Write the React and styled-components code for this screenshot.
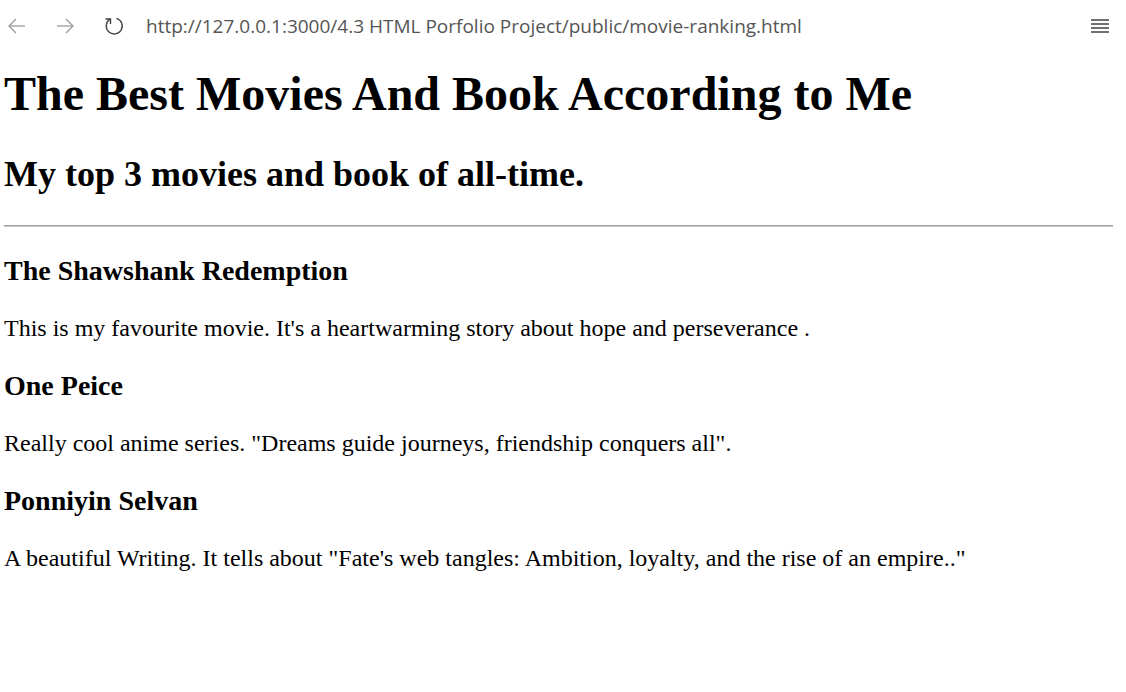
import React from "react";
import styled, { createGlobalStyle } from "styled-components";

const GlobalStyle = createGlobalStyle`
  html, body { margin: 0; padding: 0; background: #ffffff; }
`;

const Toolbar = styled.div`
  height: 52px;
  display: flex;
  align-items: center;
  gap: 28px;
  padding: 0 16px 0 7px;
  font-family: "Open Sans", "Noto Sans", sans-serif;
  color: #5f5f5f;
`;

const NavButton = styled.span`
  display: flex;
  align-items: center;
  justify-content: center;
  color: ${(p) => (p.$dim ? "#9a9a9a" : "#444")};
`;

const Url = styled.div`
  flex: 1;
  margin-left: -7px;
  font-size: 19px;
  color: #555;
  white-space: nowrap;
`;

const Menu = styled.span`
  display: flex;
  color: #444;
`;

const Page = styled.main`
  padding: 0 13px 0 4px;
  font-family: "Liberation Serif", "Times New Roman", serif;
  color: #000;
  margin-top: -18px;
`;

const Title = styled.h1`
  font-size: 48px;
  margin: 32px 0;
`;

const Subtitle = styled.h2`
  font-size: 36px;
  margin: 30px 0;
`;

const Rule = styled.hr`
  margin: 12px 0;
  border: none;
  border-top: 1px solid #a0a0a0;
  border-bottom: 1px solid #c8c8c8;
`;

const ItemTitle = styled.h3`
  font-size: 28px;
  margin: 28px 0;
`;

const Text = styled.p`
  font-size: 24px;
  margin: 24px 0;
`;

const Arrow = ({ flip }) => (
  <svg width="20" height="20" viewBox="0 0 20 20" fill="none" stroke="currentColor" strokeWidth="1.3">
    {flip ? (
      <>
        <path d="M2 10h16" />
        <path d="M11 3l7 7-7 7" />
      </>
    ) : (
      <>
        <path d="M18 10H2" />
        <path d="M9 3L2 10l7 7" />
      </>
    )}
  </svg>
);

const Reload = () => (
  <svg width="22" height="22" viewBox="0 0 22 22" fill="none" stroke="currentColor" strokeWidth="1.4">
    <path d="M7 4.2A8 8 0 1 0 13.5 3.3" />
    <path d="M7.5 9V4H2.5" />
  </svg>
);

const Lines = () => (
  <svg width="20" height="18" viewBox="0 0 20 18" stroke="currentColor" strokeWidth="1.3">
    <path d="M1 3h18M1 7h18M1 11h18M1 15h18" />
  </svg>
);

const items = [
  {
    title: "The Shawshank Redemption",
    text: "This is my favourite movie. It's a heartwarming story about hope and perseverance .",
  },
  {
    title: "One Peice",
    text: 'Really cool anime series. "Dreams guide journeys, friendship conquers all".',
  },
  {
    title: "Ponniyin Selvan",
    text: 'A beautiful Writing. It tells about "Fate\'s web tangles: Ambition, loyalty, and the rise of an empire.."',
  },
];

export default function App() {
  return (
    <>
      <GlobalStyle />
      <Toolbar>
        <NavButton $dim>
          <Arrow />
        </NavButton>
        <NavButton $dim>
          <Arrow flip />
        </NavButton>
        <NavButton>
          <Reload />
        </NavButton>
        <Url>http://127.0.0.1:3000/4.3 HTML Porfolio Project/public/movie-ranking.html</Url>
        <Menu>
          <Lines />
        </Menu>
      </Toolbar>
      <Page>
        <Title>The Best Movies And Book According to Me</Title>
        <Subtitle>My top 3 movies and book of all-time.</Subtitle>
        <Rule />
        {items.map((item) => (
          <section key={item.title}>
            <ItemTitle>{item.title}</ItemTitle>
            <Text>{item.text}</Text>
          </section>
        ))}
      </Page>
    </>
  );
}
